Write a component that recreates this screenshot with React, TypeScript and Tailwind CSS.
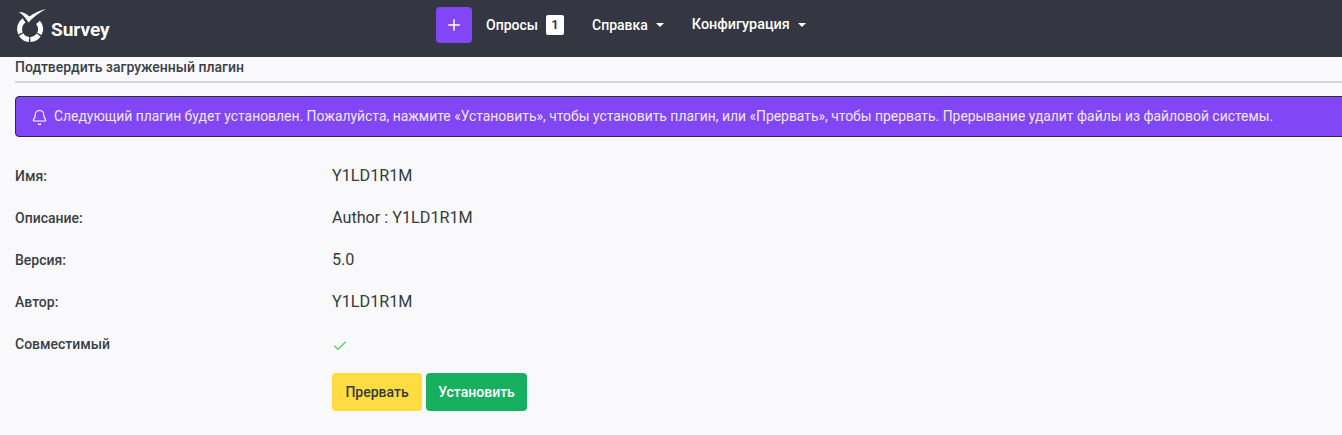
import { Bell, Check, Plus } from "lucide-react";

const font = "font-['Roboto',sans-serif]";

function Caret() {
  return <span className="ml-2 inline-block h-0 w-0 border-x-[4px] border-t-[4px] border-x-transparent border-t-white" />;
}

function Logo() {
  return (
    <svg width="32" height="36" viewBox="0 0 32 36" fill="none" className="mr-[4px]">
      <path d="M4 5 C8 5 12 7 14.5 9.5 C19 6 25 3.5 31 2 C24 6 18 10 13.5 15.5 C11 11 8 8 4 5 Z" fill="#fff" />
      <path d="M9 13.4 A10.5 10.5 0 0 0 5.5 26.4" stroke="#fff" strokeWidth="5" />
      <path d="M6.1 27.6 A10.5 10.5 0 0 0 14.1 32.5" stroke="#fff" strokeWidth="5" />
      <path d="M15.4 32.5 A10.5 10.5 0 0 0 23.6 28" stroke="#fff" strokeWidth="5" />
      <path d="M24.3 26.9 A10.5 10.5 0 0 0 23 15.3" stroke="#fff" strokeWidth="5" />
    </svg>
  );
}

function Row({ label, value }: { label: string; value: string }) {
  return (
    <div className="flex h-[42px] items-center">
      <div className="w-[317px] text-[14px] font-medium text-[#3a3f47]">{label}</div>
      <div className="text-[16.2px] text-[#343a40]">{value}</div>
    </div>
  );
}

export default function App() {
  return (
    <div className={`${font} h-[435px] w-[1342px] overflow-hidden bg-[#f9f9fb]`}>
      <nav className="flex h-[57px] items-center bg-[#343642] pb-[7px] pl-[15px]">
        <div className="flex w-[421px] items-center text-[19px] font-bold text-white">
          <Logo />
          <span className="mt-[10px]">Survey</span>
        </div>
        <button className="flex h-9 w-9 items-center justify-center rounded bg-[#8146f6] text-white">
          <Plus size={18} strokeWidth={2} />
        </button>
        <div className="ml-[14px] flex items-center text-[14px] font-medium text-white">
          Опросы
          <span className="ml-2 flex h-5 w-[18px] items-center justify-center rounded-[2px] bg-white text-[13px] font-semibold text-[#343642]">
            1
          </span>
        </div>
        <div className="ml-[28px] flex items-center text-[14px] font-medium text-white">
          Справка
          <Caret />
        </div>
        <div className="ml-[28px] flex items-center text-[14.4px] font-medium text-white">
          Конфигурация
          <Caret />
        </div>
      </nav>

      <div className="pl-[15px]">
        <div className="flex h-[26px] items-center border-b-2 border-[#d3d3d8] pb-[4px] text-[14px] font-medium text-[#3a3f47]">
          Подтвердить загруженный плагин
        </div>

        <div className="mt-[13px] flex h-[41px] w-[1340px] items-center rounded border border-[#2c2c36] bg-[#8146f6] pl-[15px] text-[13.9px] text-[#f0e8ff]">
          <Bell size={17} strokeWidth={1.5} className="mr-[6px] mt-[2px] shrink-0 text-white" />
          Следующий плагин будет установлен. Пожалуйста, нажмите «Установить», чтобы установить плагин, или «Прервать», чтобы прервать. Прерывание удалит файлы из файловой системы.
        </div>

        <div className="mt-[18px]">
          <Row label="Имя:" value="Y1LD1R1M" />
          <Row label="Описание:" value="Author : Y1LD1R1M" />
          <Row label="Версия:" value="5.0" />
          <Row label="Автор:" value="Y1LD1R1M" />
          <div className="flex h-[42px] items-center">
            <div className="w-[317px] text-[14px] font-medium text-[#3a3f47]">Совместимый</div>
            <Check size={16} strokeWidth={1.75} className="mt-[3px] text-[#3fd45a]" />
          </div>
        </div>

        <div className="ml-[317px] mt-[8px] flex gap-1">
          <button className="h-[38px] w-[90px] rounded bg-[#ffdd40] text-[14px] font-medium text-[#343a40]">
            Прервать
          </button>
          <button className="h-[38px] w-[101px] rounded bg-[#17b060] text-[14px] font-medium text-white">
            Установить
          </button>
        </div>
      </div>
    </div>
  );
}
